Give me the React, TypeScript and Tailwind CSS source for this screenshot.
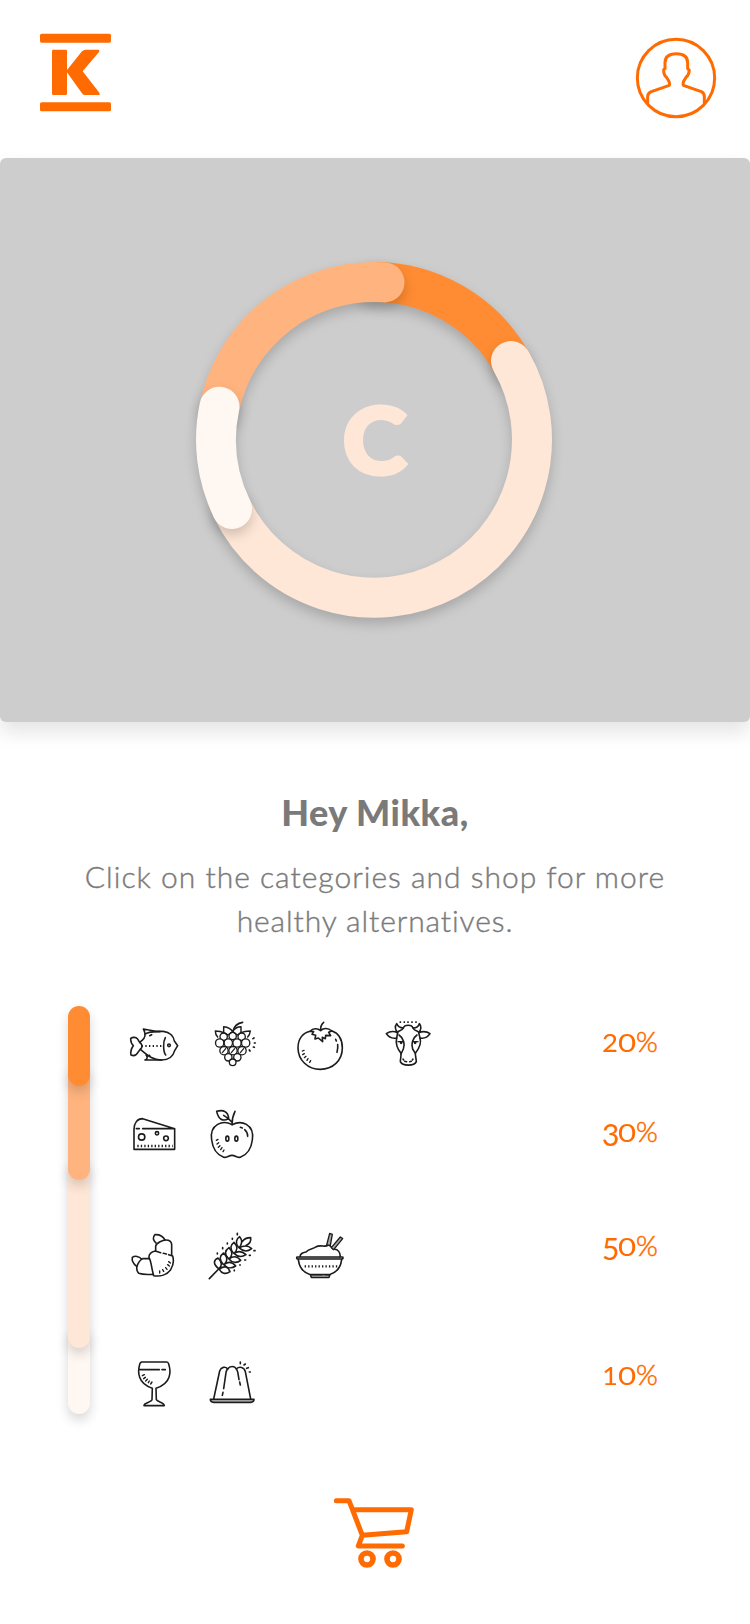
import type { ReactNode } from "react";

function Icon({ box, children }: { box: string; children: ReactNode }) {
  return (
    <svg
      viewBox={box}
      className="h-[60px] w-[60px]"
      fill="none"
      stroke="#1c1c1c"
      strokeWidth={4.8}
      strokeLinecap="round"
      strokeLinejoin="round"
    >
      {children}
    </svg>
  );
}

const Fish = () => (
  <Icon box="42 30 180 180">
    <path d="M89 112C100 104 106 94 105 88C105 81 102 77 100 72L137 79H160C181 81 191 95 193 108L203 122L194 137C190 153 176 165 155 165C128 166 110 148 91 133" />
    <path d="M89 112L82 101C78 96 68 96 62 100C62 111 65 118 70 122C64 130 61 140 63 150C72 154 80 149 84 142L91 133C99 126 97 118 89 112" />
    <path d="M105 87C116 81 126 79 150 80M105 165C113 163 113 155 108 150M105 165H155M112 154L119 151M166 98C159 110 159 139 167 150" />
    <path d="M119 92L125 89" />
    <path d="M95 123H155" strokeDasharray="4 7" strokeLinecap="butt" strokeWidth={6} />
    <circle cx="177" cy="121" r="4" />
  </Icon>
);

const berries = [
  [341, 95, 11], [395, 95, 11], [368, 93, 11],
  [329, 114, 12.5], [355, 114, 12.5], [381, 114, 12.5], [407, 114, 12.5],
  [342, 137, 12.5], [369, 137, 12.5], [396, 137, 12.5],
  [355, 157, 11], [382, 157, 11], [368, 172, 10],
];

const Berry = () => (
  <Icon box="276 30 180 180">
    {berries.map(([x, y, r], i) => (
      <circle key={i} cx={x} cy={y} r={r} fill="#fff" strokeWidth={4} />
    ))}
    <path
      d="M323 96C317 90 316 85 316 78C325 78 334 79 341 83L341 65C352 66 363 71 368 80C373 71 383 65 393 65L393 83C403 78 413 78 421 78C420 86 418 91 413 96M341 83L354 90L368 80L382 90L393 83"
      strokeWidth={4.4}
    />
    <path d="M368 80C372 64 382 54 398 52" />
    <path d="M337 143L347 131M364 143L374 131M391 143L401 131" strokeWidth={3.6} />
    <path d="M429 101L432 99M433 114H436M430 126L433 127M418 135L420 138" strokeWidth={5} />
  </Icon>
);

const Tomato = () => (
  <Icon box="30 30 180 180">
    <path d="M91 79C69 83 54 101 54 128C54 166 84 193 121 193C158 193 187 167 187 129C187 102 175 84 155 77" />
    <path d="M91 79C98 69 113 69 122 77C130 68 145 68 155 78L146 82L152 92L137 91L136 101L127 97L128 110L115 99L105 102L107 91L96 88L101 80ZM122 77C121 66 125 57 131 52" />
    <path d="M167 103L169 108M173 119C174 128 173 135 171 142" />
    <path d="M67 138L72 136M68 149L73 146M73 158L78 154M81 166L84 161M89 172L92 167" strokeWidth={4} />
  </Icon>
);

const Cow = () => (
  <Icon box="294 30 180 180">
    <path d="M370 69C373 58 396 58 399 69C408 69 416 65 418 56C425 63 424 75 416 83C424 80 439 78 450 86C443 97 431 101 420 99C425 115 417 131 406 145C406 155 409 163 409 170C403 184 367 184 361 170C361 162 364 153 363 145C352 131 346 116 350 99C338 101 326 97 319 86C330 78 344 79 353 83C345 75 344 63 350 56C354 65 361 69 370 69Z" />
    <path d="M370 69C368 75 360 77 354 80M399 69C401 75 408 77 415 80M357 90C371 99 376 119 370 132L363 147M411 90C397 99 393 119 398 132L406 145M350 99L353 83M420 99L416 83" />
    <path d="M369 162L371 165M374 169L380 170M399 162L397 165M394 169L389 170" strokeWidth={4.5} />
    <path d="M354 110H368M400 110H414" strokeWidth={4} />
    <path d="M359 111H368C367 121 359 119 359 111ZM401 111H410C409 121 401 119 401 111Z" fill="#1c1c1c" stroke="none" />
    <path d="M361 49V54M373 49V54M384 49V54M396 49V54M408 49V54" strokeWidth={4.5} strokeLinecap="butt" />
  </Icon>
);

const Cheese = () => (
  <Icon box="42 300 180 180">
    <path d="M72 433V373C72 354 82 341 98 341L194 371V433ZM98 371H194M79 371H88" />
    <circle cx="95" cy="396" r="9.5" />
    <circle cx="141" cy="385" r="5" />
    <circle cx="168" cy="400" r="7" />
    <path d="M82 423H188" strokeDasharray="4 6.4" strokeLinecap="butt" strokeWidth={7} />
  </Icon>
);

const Apple = () => (
  <Icon box="276 300 180 180">
    <path d="M366 359C380 352 397 351 409 358C425 367 430 386 427 405C424 430 411 449 391 457C382 459 376 451 366 451C356 451 350 459 341 457C321 449 308 430 305 405C302 386 307 367 323 358C336 351 353 352 366 359Z" />
    <path d="M366 359C366 341 370 329 375 319M366 352C359 343 350 336 341 331M320 319C339 313 354 319 356 340C338 352 325 342 320 319Z" />
    <ellipse cx="352" cy="401" rx="4.5" ry="7.5" />
    <ellipse cx="379" cy="401" rx="4.5" ry="7.5" />
    <path d="M391 367L397 369M404 374C410 379 413 386 413 394" />
    <path d="M319 406L324 403M321 417L326 413M325 427L330 422M332 434L336 428M339 440L342 435" strokeWidth={4} />
  </Icon>
);

const Croissant = () => (
  <Icon box="42 33 180 180">
    <path d="M95 132C87 124 75 121 67 127C65 136 70 146 80 154" />
    <path d="M117 131H98C92 132 84 144 81 154C79 162 82 170 86 175C97 179 114 179 129 178" />
    <path d="M138 84C129 77 127 67 135 59C149 58 160 66 165 75" />
    <path d="M137 107V94C137 85 158 75 168 75C178 75 184 80 185 88V121" />
    <path d="M152 113L136 108C124 111 116 119 117 128C124 138 124 158 131 182C151 186 171 179 182 164C190 151 192 136 188 123L176 119M160 115L169 117" />
    <path d="M176 140L181 144M173 149L178 153M167 158L171 163M158 164L161 169M149 168V174" strokeWidth={4.2} />
  </Icon>
);

const Wheat = () => (
  <Icon box="276 33 180 180">
    <path d="M298 191L326 162" />
    <path d="M326 161C310 148 309 136 324 129C338 142 336 153 327 161ZM328 162C345 151 354 155 360 170C347 179 334 176 328 162Z" />
    <path d="M340 148C326 135 329 122 341 114C354 128 353 139 342 149C356 138 368 142 377 153C365 161 351 160 342 149" />
    <path d="M355 130C342 118 345 106 357 98C369 110 368 122 357 132C371 121 383 125 392 136C381 145 366 144 357 132" />
    <path d="M370 114C359 101 361 90 372 82C384 94 383 106 372 115C386 106 398 110 408 119C396 127 383 126 372 115" />
    <path d="M385 97C375 85 379 71 389 65C398 76 397 87 387 98C402 91 414 90 425 101C412 111 398 109 387 98M397 80C403 70 412 68 422 68C424 79 417 88 407 92" />
    <path d="M322 114V117M338 98V101M352 84V87M367 70V73M382 55V59M432 107H435M418 121H421M404 135H407M389 150H391M373 165V167" strokeWidth={5} />
  </Icon>
);

const Bowl = () => (
  <Icon box="540 33 180 180">
    <rect x="560" y="126" width="139" height="6" rx="2" fill="#ccc" />
    <path d="M570 125C571 115 577 113 588 111C598 99 609 103 617 96C633 87 643 99 655 90C662 91 666 100 671 103C684 101 692 114 690 125M565 134C568 158 580 173 601 179H658C679 173 692 158 695 134M601 179L604 187H657L660 179M607 180H637M644 180H655" />
    <path d="M650 90L659 55L667 58L661 91ZM664 98L691 66L698 71L671 104Z" fill="#aaa" strokeWidth={4} />
    <path d="M584 154H682" strokeDasharray="4 6.4" strokeLinecap="butt" strokeWidth={7} />
  </Icon>
);

const Wine = () => (
  <Icon box="42 30 180 180">
    <path d="M94 51H171C174 51 175 54 176 57C180 69 181 85 177 97C172 112 157 124 138 130L139 164C142 171 162 172 163 182H102C101 172 124 173 126 164L127 130C109 124 94 112 89 97C84 84 86 68 90 55Z" />
    <path d="M89 74H148M156 74H166" />
    <path d="M97 92L103 89M101 101L106 97M107 108L112 103M115 113L118 108M122 117L126 111" strokeWidth={4.2} />
  </Icon>
);

const Jelly = () => (
  <Icon box="276 30 180 180">
    <path d="M301 163H432C432 168 428 172 422 172H311C305 172 301 168 301 163Z" fill="#ccc" />
    <path d="M311 162L329 78C333 66 346 63 353 72C359 62 374 62 379 72C388 63 403 66 406 80L422 162" />
    <path d="M353 72C349 75 349 78 348 83L341 131M339 142L337 151M379 72C383 77 383 80 384 86L387 104M389 111L391 120" />
    <path d="M391 51V56M402 60L406 57M410 70L415 68M418 81H421" />
  </Icon>
);

function Segment({ d, color }: { d: string; color: string }) {
  return (
    <g className="drop-shadow-[0_6px_6px_rgba(0,0,0,0.18)]">
      <path d={d} stroke={color} strokeWidth={40} strokeLinecap="round" fill="none" />
    </g>
  );
}

function Percent({ value }: { value: string }) {
  const low = value[0] === "3" || value[0] === "5";
  return (
    <span className="flex h-[30px] w-[60px] items-baseline justify-center leading-[30px]">
      <span
        className={
          low
            ? "relative top-[4px] inline-block w-[16px] text-center text-[30px]"
            : "inline-block w-[16px] scale-x-[1.1] text-center text-[25px]"
        }
      >
        {value[0]}
      </span>
      <span className="inline-block w-[18px] scale-x-[1.25] text-center text-[25px]">0</span>
      <span className="flex w-[22px] justify-center text-[28px] font-light [-webkit-text-stroke:0.5px_#ff6b00]">%</span>
    </span>
  );
}

const rows = [
  { pct: "20", row: "mt-[9px]", label: "mt-[11px]", icons: [Fish, Berry, Tomato, Cow] },
  { pct: "30", row: "mt-[30px]", label: "mt-[10px]", icons: [Cheese, Apple] },
  { pct: "50", row: "mt-[61px]", label: "mt-[3px]", icons: [Croissant, Wheat, Bowl] },
  { pct: "10", row: "mt-[69px]", label: "mt-[4px]", icons: [Wine, Jelly] },
];

export default function App() {
  return (
    <div className="flex h-[1624px] w-[750px] flex-col overflow-hidden bg-white font-['Lato',sans-serif]">
      <header className="flex h-[158px] shrink-0 items-start justify-between pr-[32px] pl-[38px]">
        <svg viewBox="114 93 225 249" className="mt-[31px] h-[83px] w-[75px]" fill="#ff6b00">
          <rect x="120" y="101" width="213" height="27" rx="5" />
          <rect x="120" y="307" width="213" height="27" rx="5" />
          <path d="M160 149H197Q201 149 201 153V210L246 154Q251 149 256 149H296Q300 151 297 156L248 214L298 278Q301 285 295 285H254Q250 285 247 281L201 217V281Q201 285 197 285H160Q156 285 156 281V153Q156 149 160 149Z" />
        </svg>
        <svg
          viewBox="102 78 252 252"
          className="mt-[36px] h-[84px] w-[84px]"
          fill="none"
          stroke="#ff6b00"
          strokeWidth={9}
          strokeLinejoin="round"
        >
          <circle cx="228" cy="204" r="116" />
          <path d="M143 281V260Q143 249 154 245L208 226C212 214 202 209 199 201C192 196 191 187 191 179L195 176V158C195 138 207 131 229 131C251 131 263 139 263 158V176L268 181C267 190 265 197 258 202C255 210 246 215 250 226L304 245Q313 249 313 260V281" />
        </svg>
      </header>

      <section className="flex h-[564px] shrink-0 items-center justify-center rounded-[6px] bg-[#cdcdcd] pr-[2px] shadow-[0_10px_20px_rgba(0,0,0,0.11)]">
        <svg viewBox="0 0 400 400" className="h-[400px] w-[400px]">
          <Segment color="#ff8c32" d="M200 42A158 158 0 0 1 337 121" />
          <Segment color="#ffb47f" d="M45.5 167A158 158 0 0 1 210.5 42.4" />
          <Segment color="#ffe7d7" d="M337 121A158 158 0 1 1 58 269" />
          <Segment color="#fff7f1" d="M58 269A158.3 158.3 0 0 1 45.5 166.7" />
          <text
            transform="translate(200.5 233.5) scale(1.05 1)"
            textAnchor="middle"
            fill="#ffe7d7"
            stroke="#ffe7d7"
            strokeWidth="4"
            className="text-[92px] font-black"
          >
            C
          </text>
        </svg>
      </section>

      <section className="flex h-[284px] shrink-0 flex-col items-center pt-[68px] text-[#7a7a7a]">
        <h1 className="text-[36px] leading-[44px] font-black tracking-[0.5px] whitespace-nowrap">Hey Mikka,</h1>
        <p className="mt-[20px] flex flex-col items-center text-[30px] leading-[44px] font-light whitespace-nowrap [-webkit-text-stroke:0.4px_#7a7a7a]">
          <span className="tracking-[1px]">Click on the categories and shop for more</span>
          <span className="tracking-[0.9px]">healthy alternatives.</span>
        </p>
      </section>

      <section className="flex h-[474px] shrink-0 pl-[68px]">
        <div className="flex w-[22px] flex-col">
          <div className="z-40 h-[80px] rounded-full bg-[#ff8c32] shadow-[0_6px_12px_rgba(0,0,0,0.16)]" />
          <div className="z-30 -mt-[22px] h-[116px] rounded-full bg-[#ffb47f] shadow-[0_6px_12px_rgba(0,0,0,0.16)]" />
          <div className="z-20 -mt-[22px] h-[190px] rounded-full bg-[#ffe7d7] shadow-[0_6px_12px_rgba(0,0,0,0.16)]" />
          <div className="z-10 -mt-[22px] h-[88px] rounded-full bg-[#fff7f1] shadow-[0_6px_12px_rgba(0,0,0,0.16)]" />
        </div>
        <div className="ml-[34px] flex w-[536px] flex-col">
          {rows.map(({ pct, row, label, icons }) => (
            <div key={pct} className={`flex h-[60px] justify-between ${row}`}>
              <div className="grid grid-cols-[78px_88px_88px_60px]">
                {icons.map((Food, i) => (
                  <Food key={i} />
                ))}
              </div>
              <div className={`text-[#ff6b00] ${label}`}>
                <Percent value={pct} />
              </div>
            </div>
          ))}
        </div>
      </section>

      <footer className="flex shrink-0 justify-center">
        <svg
          viewBox="0 0 390 330"
          className="h-[110px] w-[130px]"
          fill="none"
          stroke="#ff6b00"
          strokeWidth={15}
          strokeLinecap="round"
          strokeLinejoin="round"
        >
          <path d="M79 62H117L157 166L145 198H277M129 89H304L290 155L157 166" />
          <circle cx="171" cy="237" r="18" strokeWidth={17} />
          <circle cx="249" cy="237" r="18" strokeWidth={17} />
        </svg>
      </footer>
    </div>
  );
}
